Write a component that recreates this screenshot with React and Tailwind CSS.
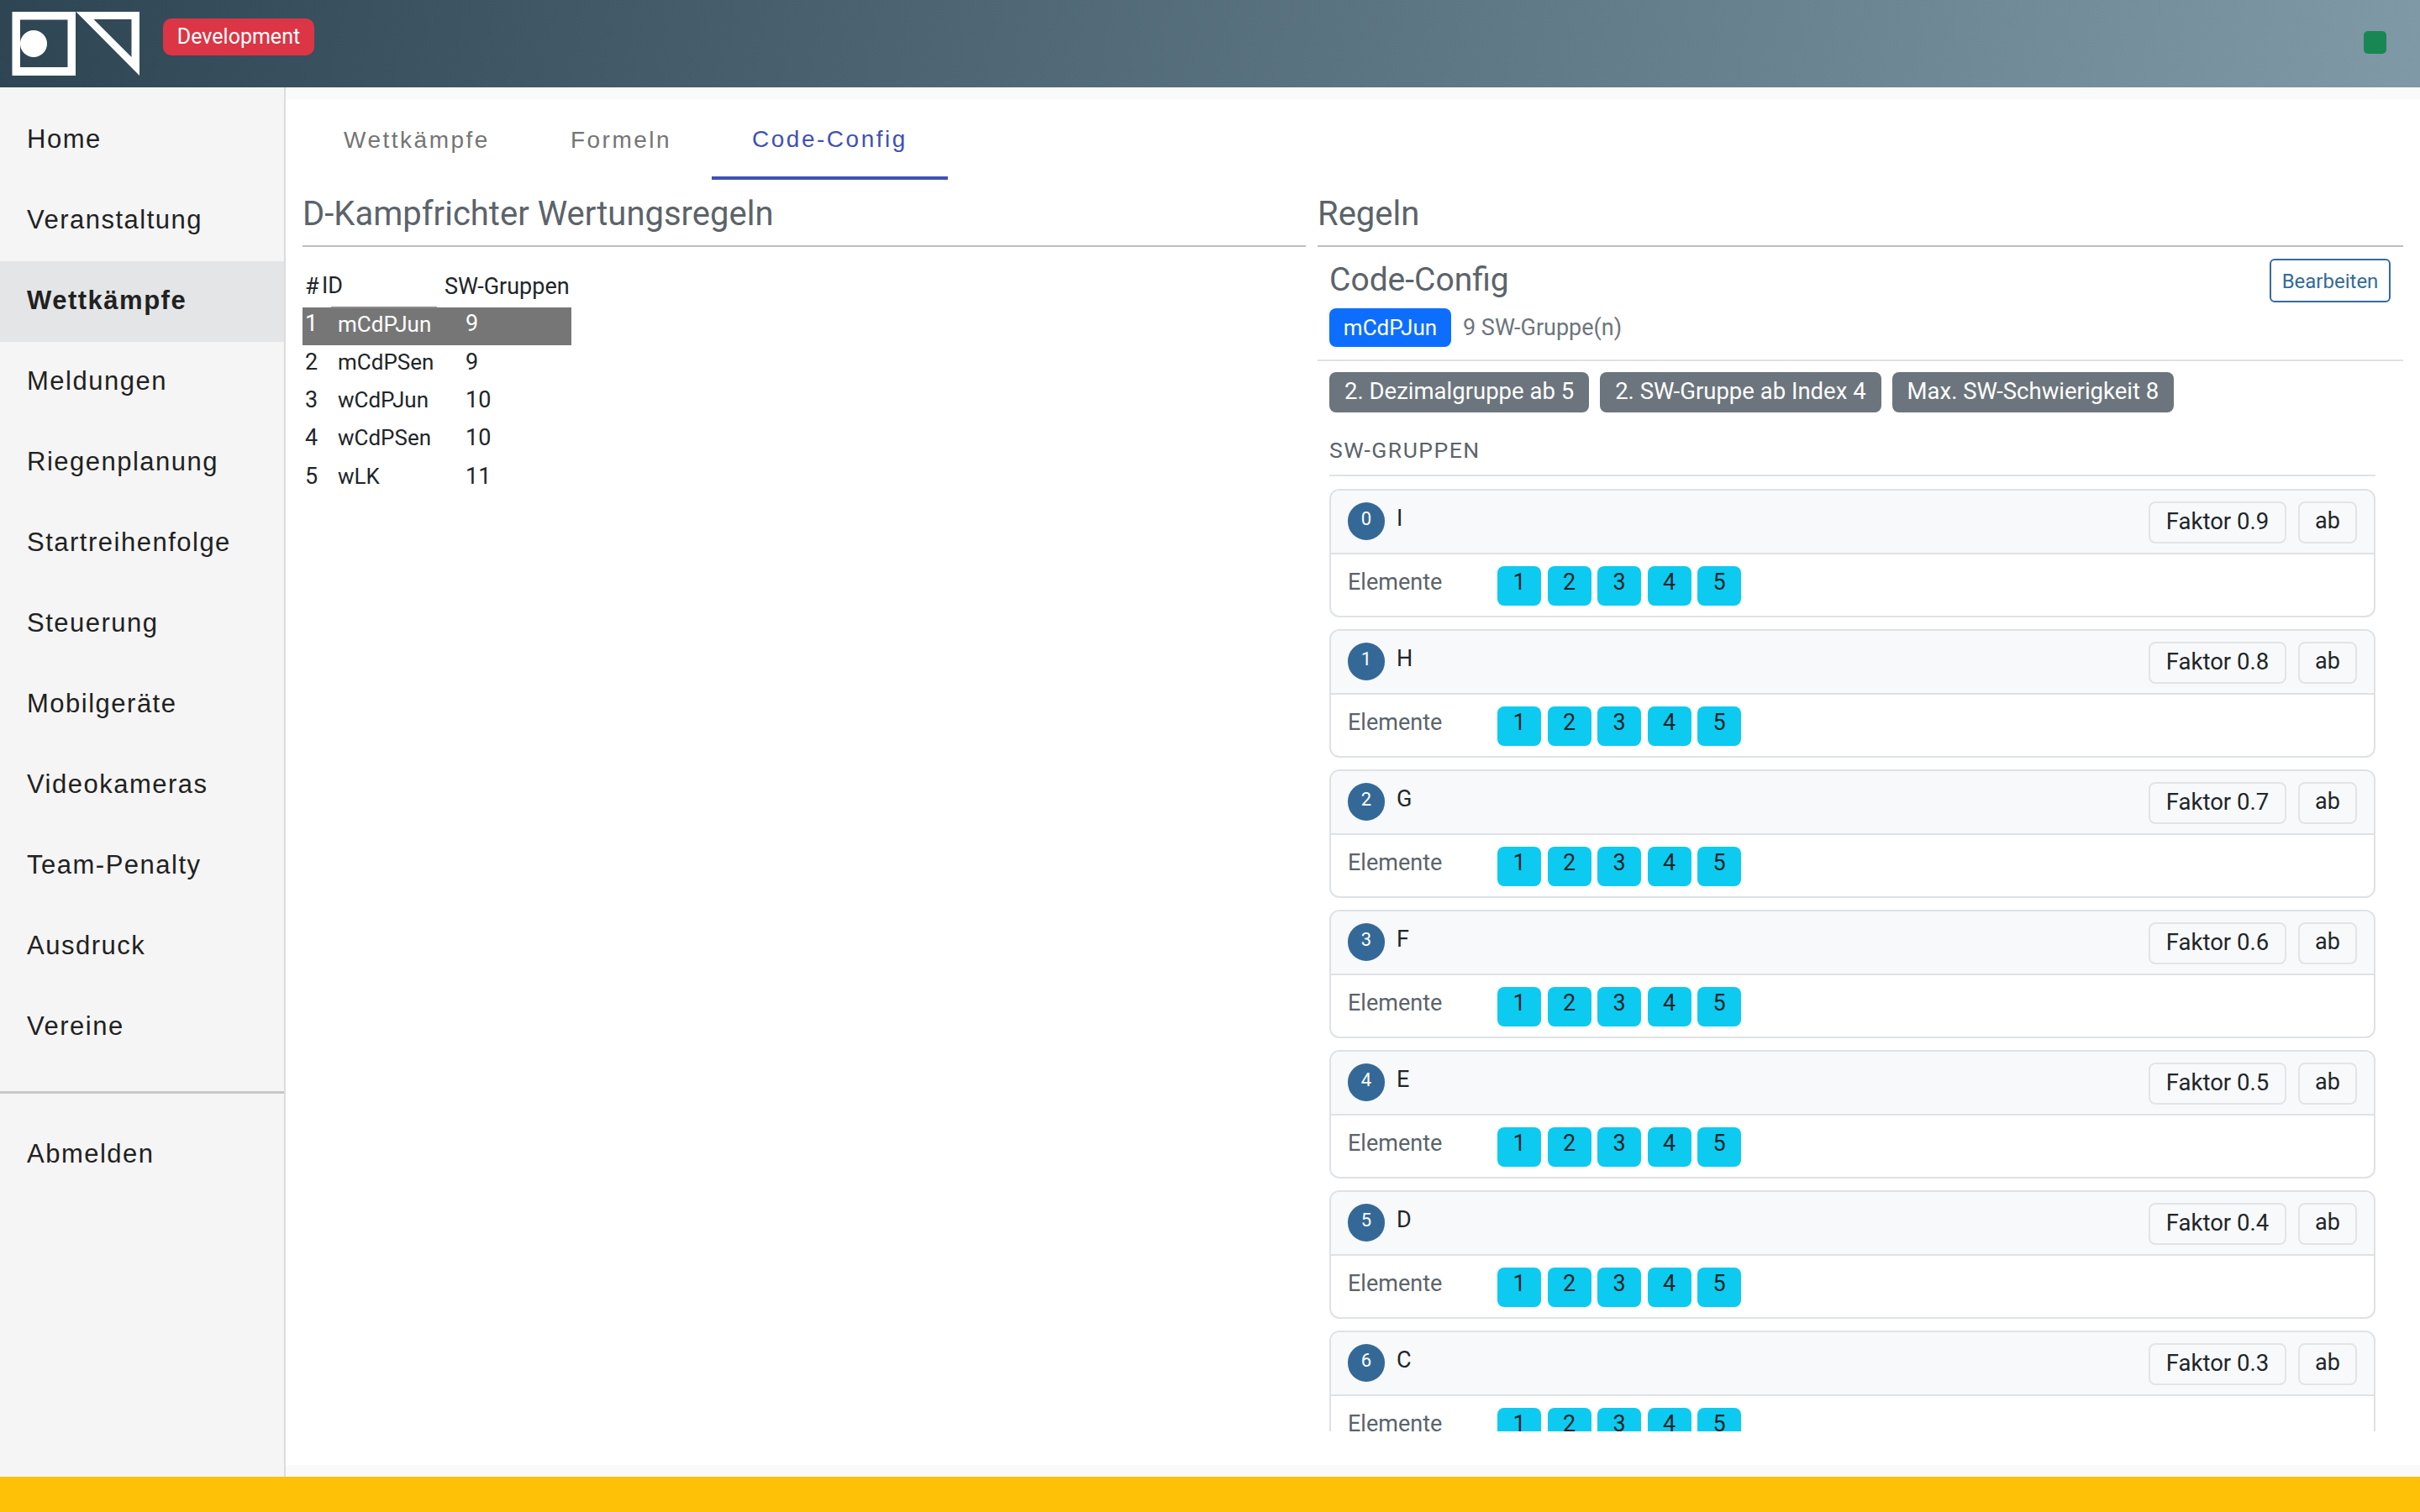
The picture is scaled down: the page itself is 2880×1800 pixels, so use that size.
const navItems = ["Home", "Veranstaltung", "Wettkämpfe", "Meldungen", "Riegenplanung", "Startreihenfolge", "Steuerung", "Mobilgeräte", "Videokameras", "Team-Penalty", "Ausdruck", "Vereine"];

const rows = [
  ["1", "mCdPJun", "9"],
  ["2", "mCdPSen", "9"],
  ["3", "wCdPJun", "10"],
  ["4", "wCdPSen", "10"],
  ["5", "wLK", "11"],
];

const groups = [
  ["0", "I", "0.9"],
  ["1", "H", "0.8"],
  ["2", "G", "0.7"],
  ["3", "F", "0.6"],
  ["4", "E", "0.5"],
  ["5", "D", "0.4"],
  ["6", "C", "0.3"],
];

const Logo = () => (
  <svg width="154" height="78" viewBox="0 0 154 78" className="ml-[14px] shrink-0">
    <path fill="#fff" fillRule="evenodd" d="M0.5 1h75.5v76h-75.5z M10 10.500v56.500h56.500v-56.500z" />
    <circle cx="26" cy="39" r="16" fill="#fff" />
    <path fill="#fff" fillRule="evenodd" d="M76.500 1h75.500v76z M97.500 10l45 45v-45z" />
  </svg>
);

const Sidebar = () => (
  <aside className="w-[340px] shrink-0 bg-[#f5f5f5] border-r-[2px] border-[#dcdcdc] pt-[15px] font-['Liberation_Sans',sans-serif] text-[31px] tracking-[1.5px] text-[#212121]">
    {navItems.map((item) => (
      <div
        key={item}
        className={`h-[96px] pb-[1px] flex items-center pl-[32px] ${item === "Wettkämpfe" ? "bg-[#e4e5e6] font-bold" : ""}`}
      >
        {item}
      </div>
    ))}
    <div className="mt-[28px] border-t-[3px] border-[#c8c8c8] pt-[25px]">
      <div className="h-[96px] pb-[1px] flex items-center pl-[32px]">Abmelden</div>
    </div>
  </aside>
);

const Tabs = () => (
  <div className="flex h-[96px] pl-[21px] font-['Liberation_Sans',sans-serif] text-[28px] tracking-[2.500px]">
    <div className="px-[48px] pt-[2px] flex items-center text-[#757575]">Wettkämpfe</div>
    <div className="px-[48px] pt-[2px] flex items-center text-[#757575]">Formeln</div>
    <div className="px-[48px] pt-[4px] flex items-center text-[#3f51b5] border-b-[4px] border-[#3f51b5]">Code-Config</div>
  </div>
);

const RuleTable = () => (
  <table className="mt-[25px] border-collapse text-[27px] leading-[36px] text-[#212529]">
    <thead>
      <tr className="h-[47px]">
        <th className="w-[34px] pl-[3px] pb-[4px] text-left font-normal">#</th>
        <th className="w-[126px] pb-[4px] text-left font-normal border-b-[2px] border-[#8a8a8a]"><span className="-ml-[11px]">ID</span></th>
        <th className="w-[160px] pl-[9px] pb-[4px] text-left font-normal whitespace-nowrap">SW-Gruppen</th>
      </tr>
    </thead>
    <tbody>
      {rows.map(([nr, id, count]) => (
        <tr key={nr} className={`h-[45.400px] ${nr === "1" ? "bg-[#767676] text-white" : ""}`}>
          <td className="pl-[3px] pb-[7px]">{nr}</td>
          <td className="pl-[8px] pb-[7px] text-[26px]">{id}</td>
          <td className="pl-[34px] pb-[7px]">{count}</td>
        </tr>
      ))}
    </tbody>
  </table>
);

const GroupCard = ({ nr, name, factor }) => (
  <div className="mb-[14px] h-[153px] shrink-0 border-[2px] border-[#dee2e6] rounded-[12px] overflow-hidden">
    <div className="h-[76px] bg-[#f8f9fa] border-b-[2px] border-[#dee2e6] flex items-start pl-[20px] pr-[20px] pt-[13px]">
      <span className="mt-[1px] w-[44px] h-[45px] rounded-full bg-[#346997] text-white text-[22px] flex justify-center pt-[5px] leading-[30px]">{nr}</span>
      <span className="ml-[14px] text-[27px] leading-[40px] text-[#212529]">{name}</span>
      <span className="ml-auto h-[50px] w-[164px] pb-[3px] border-[2px] border-[#e2e4e8] rounded-[8px] flex items-center justify-center text-[27.500px] text-[#212529]">Faktor {factor}</span>
      <span className="ml-[14px] h-[50px] w-[70px] pb-[3px] border-[2px] border-[#e2e4e8] rounded-[8px] flex items-center justify-center text-[27px] text-[#212529]">ab</span>
    </div>
    <div className="flex items-start pl-[20px] pt-[14px]">
      <span className="w-[178px] text-[27px] leading-[38px] text-[#5c636a]">Elemente</span>
      <div className="flex gap-[7.500px]">
        {["1", "2", "3", "4", "5"].map((el) => (
          <span key={el} className="w-[52px] h-[47px] rounded-[8px] bg-[#0dcaf0] flex justify-center text-[27px] leading-[38px] text-[#212529]">{el}</span>
        ))}
      </div>
    </div>
  </div>
);

const CodeConfig = () => (
  <div className="flex flex-col flex-1 min-h-0 overflow-hidden">
    <div className="px-[14px] pt-[14px] flex justify-between items-start">
      <div className="text-[39px] leading-[50px] text-[#5c636a]">Code-Config</div>
      <div className="mr-[1px] h-[52px] w-[144px] pt-[2px] border-[2px] border-[#346b9a] rounded-[6px] flex items-center justify-center text-[24px] text-[#336b98]">Bearbeiten</div>
    </div>
    <div className="px-[14px] mt-[7px] flex items-center">
      <span className="h-[46px] w-[145px] rounded-[8px] bg-[#0d6efd] text-white flex items-center justify-center text-[26px]">mCdPJun</span>
      <span className="ml-[14px] text-[27px] text-[#6c757d]">9 SW-Gruppe(n)</span>
    </div>
    <div className="mt-[15px] border-t-[2px] border-[#dee2e6]" />
    <div className="px-[14px] mt-[13px] flex gap-[13px]">
      {["2. Dezimalgruppe ab 5", "2. SW-Gruppe ab Index 4", "Max. SW-Schwierigkeit 8"].map((b) => (
        <span key={b} className="h-[48px] px-[18px] pb-[2px] rounded-[8px] bg-[#6c757d] text-white flex items-center text-[27.500px]">{b}</span>
      ))}
    </div>
    <div className="ml-[14px] mr-[33px] mt-[27px] pb-[11px] text-[26.500px] tracking-[1.500px] leading-[36px] text-[#5c636a] uppercase border-b-[2px] border-[#dee2e6]">SW-Gruppen</div>
    <div className="ml-[14px] mr-[33px] mt-[15px] flex flex-col flex-1 min-h-0 overflow-hidden">
      {groups.map(([nr, name, factor]) => (
        <GroupCard key={nr} nr={nr} name={name} factor={factor} />
      ))}
    </div>
  </div>
);

const App = () => {
  return (
    <div className="h-screen flex flex-col overflow-hidden font-['Roboto','Noto_Sans',sans-serif]">
      <header className="h-[104px] shrink-0 flex items-start bg-[linear-gradient(100deg,#2e4553,#7f99a6)] pt-[13px]">
        <Logo />
        <span className="ml-[26px] mt-[9px] h-[44px] w-[180px] pb-[1px] rounded-[10px] bg-[#dc3545] text-white flex items-center justify-center text-[25px]">Development</span>
        <span className="ml-auto mr-[40px] mt-[24px] w-[27px] h-[27px] rounded-[5px] bg-[#198754]" />
      </header>

      <div className="flex flex-1 min-h-0">
        <Sidebar />
        <main className="flex-1 min-w-0 bg-[#fafafa] py-[14px]">
          <div className="h-full bg-white flex flex-col pb-[40px]">
            <Tabs />
            <div className="flex flex-1 min-h-0 pl-[20px] pr-[20px] gap-[14px]">
              <section className="w-[1194px] shrink-0">
                <h2 className="h-[80px] pt-[3px] flex items-center text-[40px] text-[#5c636a] border-b-[2px] border-[#bdbdbd]">D-Kampfrichter Wertungsregeln</h2>
                <RuleTable />
              </section>
              <section className="flex-1 min-w-0 flex flex-col">
                <h2 className="h-[80px] pt-[3px] shrink-0 flex items-center text-[40px] text-[#5c636a] border-b-[2px] border-[#bdbdbd]">Regeln</h2>
                <CodeConfig />
              </section>
            </div>
          </div>
        </main>
      </div>

      <footer className="h-[42px] shrink-0 bg-[#ffc107]" />
    </div>
  );
};

export default App;
